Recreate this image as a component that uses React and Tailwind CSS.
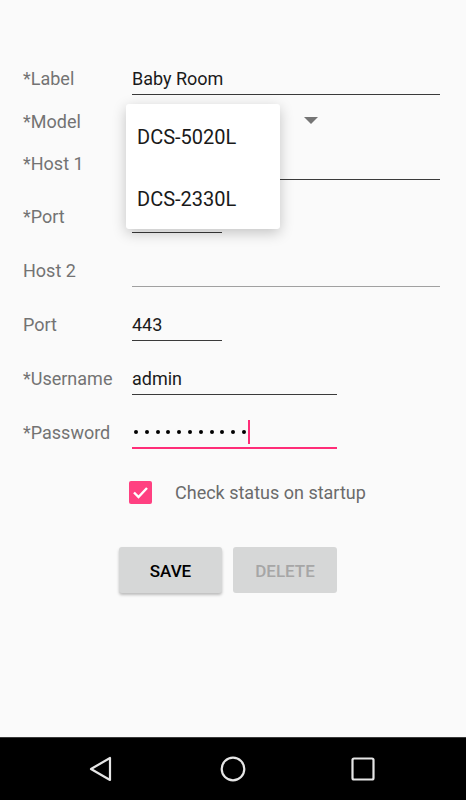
import React from "react";

const font = { fontFamily: "Roboto, 'Noto Sans', sans-serif" };

function Row({ label, h = "h-[54px]", children }) {
  return (
    <div className={`flex items-center ${h}`}>
      <div className="w-[132px] shrink-0 pl-[23px] text-[18px] text-[#737373]">{label}</div>
      {children}
    </div>
  );
}

function Field({ value, w = "w-[308px]", line = "border-[#3a3a3a]" }) {
  return (
    <div className={`${w} h-[34px] border-b ${line} flex items-center text-[18px] text-[#1a1a1a] pt-[1px]`}>
      {value}
    </div>
  );
}

export default function App() {
  return (
    <div className="min-h-[800px] flex flex-col bg-[#fafafa]" style={font}>
      <div className="flex-1 relative pt-[51px]">
        <Row label="*Label">
          <Field value="Baby Room" />
        </Row>
        <Row label="*Model" h="h-[32px]">
          <div className="w-[190px] h-[32px] flex items-center justify-end pr-[4px]">
            <svg width="14" height="8" viewBox="0 0 14 8">
              <path d="M0 0 L14 0 L7 7 Z" fill="#757575" />
            </svg>
          </div>
        </Row>
        <Row label="*Host 1" h="h-[52px]">
          <Field value="" />
        </Row>
        <Row label="*Port">
          <Field value="" w="w-[90px]" />
        </Row>
        <Row label="Host 2">
          <Field value="" line="border-[#a0a0a0]" />
        </Row>
        <Row label="Port">
          <Field value="443" w="w-[90px]" />
        </Row>
        <Row label="*Username">
          <Field value="admin" w="w-[205px]" />
        </Row>
        <Row label="*Password">
          <div className="w-[205px] h-[34px] border-b-2 border-[#ff2d78] flex items-center pl-[2px] pt-[1px]">
            <div className="flex gap-[6.8px]">
              {Array.from({ length: 11 }).map((_, i) => (
                <div key={i} className="w-[4px] h-[4px] rounded-full bg-black" />
              ))}
            </div>
            <div className="ml-[2px] w-[2px] h-[24px] bg-[#ff2d78]" />
          </div>
        </Row>

        <div className="mt-[21px] flex items-center h-[24px]">
          <div className="ml-[129px] w-[23px] h-[23px] rounded-[2px] bg-[#ff4081] flex items-center justify-center">
            <svg width="17" height="13" viewBox="0 0 17 13">
              <path d="M2 6.5 L6.5 11 L15 2" stroke="white" strokeWidth="2.4" fill="none" />
            </svg>
          </div>
          <div className="ml-[23px] text-[18px] text-[#6b6b6b]">Check status on startup</div>
        </div>

        <div className="mt-[43px] flex">
          <button className="ml-[119px] w-[103px] h-[46px] pt-[3px] rounded-[3px] bg-[#d6d7d7] shadow-[0_2px_3px_rgba(0,0,0,0.25)] text-[17px] font-medium text-black">
            SAVE
          </button>
          <button className="ml-[11px] w-[104px] h-[46px] pt-[3px] rounded-[3px] bg-[#d6d7d7] text-[17px] font-medium text-[#a6a6a6]">
            DELETE
          </button>
        </div>

        <div className="absolute left-[126px] top-[104px] w-[154px] h-[125px] bg-white rounded-[3px] shadow-[0_4px_14px_rgba(0,0,0,0.22)] flex flex-col">
          <div className="h-[62px] flex items-center pl-[11px] pt-[4px] text-[20px] text-[#1a1a1a]">DCS-5020L</div>
          <div className="h-[62px] flex items-center pl-[11px] pt-[4px] text-[20px] text-[#1a1a1a]">DCS-2330L</div>
        </div>
      </div>

      <div className="h-[63px] bg-black border-t border-[#3a3a3a] flex items-center">
        <div className="ml-[89px]">
          <svg width="24" height="26" viewBox="0 0 24 26">
            <path d="M21 2 L21 24 L2 13 Z" stroke="#e6e6e6" strokeWidth="2.2" fill="none" strokeLinejoin="round" />
          </svg>
        </div>
        <div className="ml-[106px]">
          <svg width="28" height="28" viewBox="0 0 28 28">
            <circle cx="14" cy="14" r="11.3" stroke="#e6e6e6" strokeWidth="2.2" fill="none" />
          </svg>
        </div>
        <div className="ml-[104px]">
          <svg width="24" height="24" viewBox="0 0 24 24">
            <rect x="1.5" y="1.5" width="21" height="21" rx="1.5" stroke="#e6e6e6" strokeWidth="2.2" fill="none" />
          </svg>
        </div>
      </div>
    </div>
  );
}
